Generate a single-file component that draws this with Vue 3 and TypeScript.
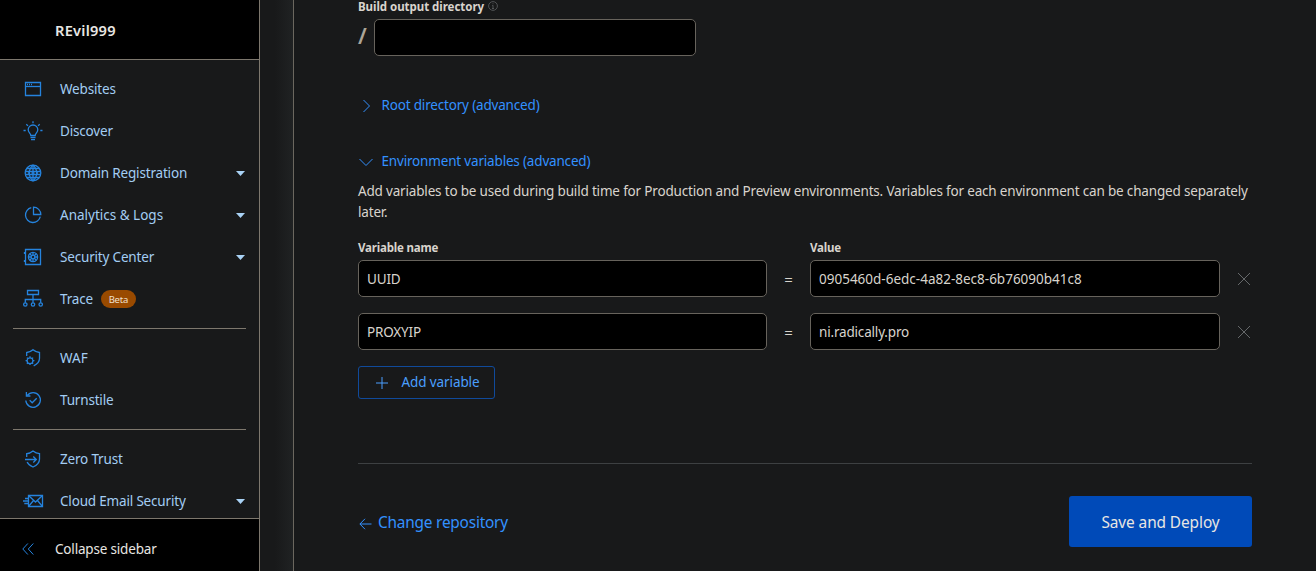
<script setup lang="ts">
import { ref } from 'vue'

type IconName =
  | 'window' | 'bulb' | 'globe' | 'pie' | 'safe' | 'tree'
  | 'shieldGear' | 'turnstile' | 'shieldArrow' | 'mail'

interface NavItem {
  label: string
  icon: IconName
  expandable?: boolean
  badge?: string
  loose?: boolean
}

const groups: NavItem[][] = [
  [
    { label: 'Websites', icon: 'window' },
    { label: 'Discover', icon: 'bulb' },
    { label: 'Domain Registration', icon: 'globe', expandable: true },
    { label: 'Analytics & Logs', icon: 'pie', expandable: true, loose: true },
    { label: 'Security Center', icon: 'safe', expandable: true },
    { label: 'Trace', icon: 'tree', badge: 'Beta' },
  ],
  [
    { label: 'WAF', icon: 'shieldGear', loose: true },
    { label: 'Turnstile', icon: 'turnstile' },
  ],
  [
    { label: 'Zero Trust', icon: 'shieldArrow' },
    { label: 'Cloud Email Security', icon: 'mail', expandable: true },
  ],
]

// Stroke paths on a 20x20 grid.
const icons: Record<IconName, string[]> = {
  window: ['M2.500 3.500h15v13h-15z', 'M2.500 7.500h15', 'M4 5.500h1M6 5.500h1M8 5.500h1'],
  bulb: [
    'M7.800 14.500c0-2-2.600-2.800-2.600-5.700a4.800 4.800 0 0 1 9.600 0c0 2.900-2.600 3.700-2.600 5.700z',
    'M7.500 16.500h5M8 18.700h4',
    'M10 .300v2M.500 9.500h2.200M17.300 9.500h2.200M3.300 3.200l1.700 1.700M16.700 3.200L15 4.900',
  ],
  globe: [
    'M10 2.200a7.800 7.800 0 1 0 0 15.600a7.800 7.800 0 0 0 0-15.600z',
    'M10 2.200c-5 4.400-5 11.200 0 15.600c5-4.400 5-11.200 0-15.600z',
    'M10 2v16M3.500 5.500h13M2 8.500h16M2 11.500h16M3.500 14.500h13',
    'M5 10h2M8.500 10h3M13 10h2',
  ],
  pie: ['M8.300 2.700a7.500 7.500 0 1 0 9 9', 'M10.500 2.200v7.300h7.300A7.300 7.300 0 0 0 10.500 2.200z'],
  safe: [
    'M2.500 2.500h15v15h-15z',
    'M10 5.400a4.600 4.600 0 1 0 0 9.200a4.600 4.600 0 0 0 0-9.200z',
    'M10 8.200a1.800 1.800 0 1 0 0 3.600a1.800 1.800 0 0 0 0-3.600z',
    'M10 5.400v2.800M10 11.800v2.800M5.400 10h2.800M11.800 10h2.800M6.700 6.700l2 2M11.300 11.300l2 2M13.300 6.700l-2 2M8.700 11.300l-2 2',
    'M1.500 5v2M1.500 13v2',
  ],
  tree: [
    'M4.500 1.500h11v4h-11z',
    'M10 5.500v8.300M2.300 13.800v-3.300h15.400v3.300',
    'M2.300 13.800a1.700 1.700 0 1 0 0 3.400a1.700 1.700 0 0 0 0-3.400z',
    'M10 13.800a1.700 1.700 0 1 0 0 3.400a1.700 1.700 0 0 0 0-3.400z',
    'M17.700 13.800a1.700 1.700 0 1 0 0 3.400a1.700 1.700 0 0 0 0-3.400z',
  ],
  shieldGear: [
    'M3.700 8V4.500C6.300 4.300 8.200 3.300 10 1.700c1.900 1.600 3.900 2.600 6.500 2.800v5.800c0 3.600-2.400 6-5.800 7.500',
    'M7 9.800a2.900 2.900 0 1 0 0 5.800a2.900 2.900 0 0 0 0-5.800z',
    'M7 8.300v1.500M7 15.600v1.500M2.600 12.700h1.500M9.900 12.700h1.500M3.900 9.600l1 1M9.100 14.800l1 1M10.100 9.600l-1 1M4.900 14.800l-1 1',
  ],
  turnstile: ['M4.300 5.500a7.300 7.300 0 1 1-1.500 5', 'M3.400 2v4h4', 'M6.700 10.300l2.500 2.500 4.500-4.500'],
  shieldArrow: [
    'M3.700 8V4.700C6.300 4.500 8.200 3.500 10 2c1.900 1.500 3.900 2.500 6.500 2.700v5.500c0 3.600-2.700 6-6.500 7.800c-2.900-1.300-5-3-5.900-5',
    'M2 10.500h11.200M10.300 7.500l3 3-3 3',
  ],
  mail: ['M5.500 4.500h14v11h-14z', 'M5.500 4.500l7 6.500 7-6.500M5.500 15.500l5-6M19.500 15.500l-5-6', 'M2 7.500h3.500M0 10h5.500M1.300 12.500h4.200'],
}

const outputDirectory = ref('')
const variables = ref([
  { name: 'UUID', value: '0905460d-6edc-4a82-8ec8-6b76090b41c8' },
  { name: 'PROXYIP', value: 'ni.radically.pro' },
])

function addVariable(): void {
  variables.value.push({ name: '', value: '' })
}

function removeVariable(index: number): void {
  variables.value.splice(index, 1)
}
</script>

<template>
  <div class="app">
    <aside class="sidebar">
      <header class="account"><span>REvil999</span></header>
      <nav class="nav">
        <ul v-for="(group, g) in groups" :key="g" class="group">
          <li v-for="item in group" :key="item.label" class="item">
            <svg class="icon" viewBox="0 0 20 20">
              <path v-for="(d, i) in icons[item.icon]" :key="i" :d="d" />
            </svg>
            <span :class="{ loose: item.loose }">{{ item.label }}</span>
            <span v-if="item.badge" class="badge">{{ item.badge }}</span>
            <svg v-if="item.expandable" class="caret" viewBox="0 0 9 5"><path d="M0 0h9L4.500 5z" /></svg>
          </li>
        </ul>
      </nav>
      <footer class="collapse">
        <svg class="chevrons" viewBox="0 0 12 12"><path d="M5.800.500L.800 6l5 5.500M11.300.500l-5 5.500 5 5.500" /></svg>
        <span>Collapse sidebar</span>
      </footer>
    </aside>
    <div class="gutter"></div>

    <main class="content">
      <div class="label output-label">
        <span>Build output directory</span>
        <svg class="info" viewBox="0 0 10 10">
          <circle cx="5" cy="5" r="4.400" />
          <path d="M5 4.300v3.200M4.300 4.500H5M4 7.500h2M5 2.300v.900" />
        </svg>
      </div>
      <div class="output-row">
        <span class="slash">/</span>
        <input v-model="outputDirectory" class="field output" />
      </div>

      <a class="toggle root">
        <svg viewBox="0 0 14 14"><path d="M4.500 1l6 6-6 6" /></svg>
        <span>Root directory (advanced)</span>
      </a>
      <a class="toggle env">
        <svg viewBox="0 0 14 14"><path d="M.500 4l6.500 6.500L13.500 4" /></svg>
        <span>Environment variables (advanced)</span>
      </a>
      <p class="help">
        Add variables to be used during build time for Production and Preview environments. Variables for each environment can be changed separately<br />later.
      </p>

      <div class="grid heads">
        <span class="label">Variable name</span>
        <span></span>
        <span class="label">Value</span>
      </div>
      <div v-for="(row, i) in variables" :key="i" class="grid row">
        <input v-model="row.name" class="field" />
        <span class="equals">=</span>
        <input v-model="row.value" class="field" :class="{ loose: /^[0-9a-f-]{36}$/.test(row.value) }" />
        <button class="remove" @click="removeVariable(i)">
          <svg viewBox="0 0 14 14"><path d="M1 1l12 12M13 1L1 13" /></svg>
        </button>
      </div>
      <button class="add" @click="addVariable">
        <svg viewBox="0 0 12 12"><path d="M6 0v12M0 6h12" /></svg>
        <span>Add variable</span>
      </button>

      <div class="actions">
        <a class="back">
          <svg viewBox="0 0 13 12"><path d="M6 .800L.900 6 6 11.200M.900 6H12.500" /></svg>
          <span>Change repository</span>
        </a>
        <button class="deploy"><span>Save and Deploy</span></button>
      </div>
    </main>
  </div>
</template>

<style>
body {
  margin: 0;
  background: #18191a;
}
</style>

<style scoped>
* {
  box-sizing: border-box;
}
.app {
  display: flex;
  width: 1316px;
  height: 571px;
  overflow: hidden;
  background: #18191a;
  color: #d8d4cd;
  font: 13.5px/21px 'Noto Sans', 'Open Sans', sans-serif;
  letter-spacing: -0.178px;
  white-space: nowrap;
}
svg {
  display: block;
  flex: none;
  fill: none;
  stroke: currentColor;
}
button {
  font: inherit;
  letter-spacing: inherit;
  cursor: pointer;
}
.sidebar {
  display: flex;
  flex-direction: column;
  width: 260px;
  flex: none;
  border-right: 1px solid #7d776d;
}
.account {
  height: 60px;
  flex: none;
  padding: 20px 0 0 55px;
  background: #000;
  border-bottom: 1px solid #7d776d;
  color: #e8e6e3;
  font-size: 14.6px;
  font-weight: 600;
  letter-spacing: 0.25px;
}
.nav {
  flex: 1;
  min-height: 0;
  overflow: hidden;
  padding: 8px 13px 0;
}
.group {
  list-style: none;
  margin: 0;
  padding: 0;
}
.group + .group {
  border-top: 1px solid #7d776d;
  margin-top: 8px;
  padding-top: 8px;
}
.item {
  display: flex;
  align-items: center;
  height: 42px;
  padding: 0 0 0 10px;
  color: #a3cdf3;
}
.item .loose,
.field.loose {
  letter-spacing: 0;
}
.icon {
  width: 20px;
  height: 20px;
  margin-right: 17px;
  overflow: visible;
  color: #2583dd;
  stroke-width: 1.3;
}
.caret {
  width: 9px;
  height: 5px;
  margin: 0 1px 0 auto;
  fill: #a9d2f5;
  stroke: none;
}
.badge {
  width: 35px;
  height: 18px;
  margin-left: 8px;
  border-radius: 9px;
  background: #994a00;
  color: #f0e0cf;
  font-size: 9.5px;
  line-height: 19px;
  text-align: center;
}
.collapse {
  display: flex;
  align-items: center;
  height: 53px;
  flex: none;
  padding: 9px 0 0 22px;
  background: #000;
  border-top: 1px solid #7d776d;
  color: #e8e6e3;
}
.chevrons {
  width: 12px;
  height: 12px;
  margin: -1px 21px 0 0;
  color: #2583dd;
}
.gutter {
  width: 34px;
  flex: none;
  border-right: 1px solid #6b675f;
  background: linear-gradient(90deg, #18191a 0, #18191a 45%, #202223 100%);
}
.content {
  display: flex;
  flex-direction: column;
  align-items: stretch;
  width: 958px;
  padding-left: 64px;
}
.label {
  font-size: 11.5px;
  font-weight: 700;
  line-height: 19px;
}
.output-label {
  display: flex;
  height: 19px;
  line-height: 14px;
  letter-spacing: -0.04px;
}
.info {
  width: 10px;
  height: 10px;
  margin: 1px 0 0 4px;
  color: #5e6163;
  stroke-width: 0.8;
}
.output-row {
  display: flex;
  align-items: center;
  height: 37px;
}
.slash {
  width: 16px;
  margin-top: -4px;
  color: #aca598;
  font-size: 22px;
  font-weight: 600;
}
.field {
  display: block;
  width: 100%;
  min-width: 0;
  height: 37px;
  padding: 0 8px;
  border: 1px solid #67635c;
  border-radius: 5px;
  outline: none;
  background: #000;
  color: #d8d4cd;
  font: inherit;
  letter-spacing: inherit;
}
.output {
  width: 322px;
}
.toggle {
  display: flex;
  align-items: center;
  height: 21px;
  color: #3391ff;
}
.toggle svg {
  width: 14px;
  height: 14px;
  margin: 1px 9px 0 0.5px;
}
.root {
  margin-top: 39px;
}
.env {
  margin-top: 35px;
}
.help {
  margin: 9px 0 0;
}
.grid {
  display: grid;
  grid-template-columns: 409px 43px 410px 32px;
  align-items: center;
}
.heads {
  height: 19px;
  margin: 15px 0 3px;
}
.row {
  height: 37px;
  margin-bottom: 16px;
}
.equals {
  padding-top: 2px;
  font-size: 15px;
  text-align: center;
}
.remove {
  display: flex;
  padding: 0;
  margin-left: 17px;
  border: 0;
  background: none;
  color: #65686a;
}
.remove svg {
  width: 14px;
  height: 14px;
}
.add {
  display: flex;
  align-items: center;
  align-self: flex-start;
  width: 137px;
  height: 33px;
  padding: 0 0 0 17px;
  border: 1px solid #104a9b;
  border-radius: 3px;
  background: transparent;
  color: #4a9fff;
  letter-spacing: -0.1px;
}
.add svg {
  width: 12px;
  height: 12px;
  margin-right: 13.500px;
}
.actions {
  display: flex;
  justify-content: space-between;
  margin-top: 64px;
  padding-top: 32px;
  border-top: 1px solid #3d4042;
}
.back {
  display: flex;
  align-items: center;
  height: 51px;
  padding: 2px 0 0 1px;
  color: #3391ff;
  font-size: 15.4px;
  letter-spacing: -0.21px;
}
.back svg {
  width: 13px;
  height: 12px;
  margin: 2px 6px 0 0;
}
.deploy {
  width: 183px;
  height: 51px;
  padding: 2px 0 0;
  border: 0;
  border-radius: 3px;
  background: #004ab8;
  color: #e8e6e3;
  font-size: 15.4px;
  letter-spacing: -0.08px;
}
</style>
